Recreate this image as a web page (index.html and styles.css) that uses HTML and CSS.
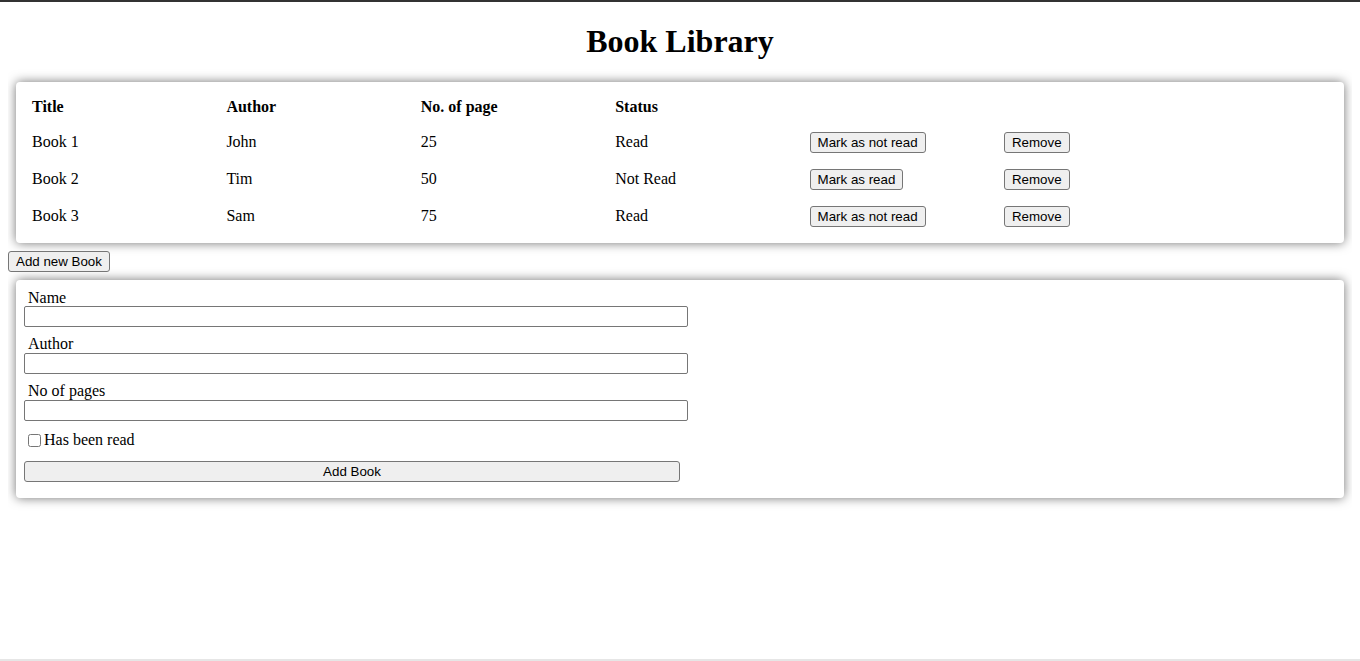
FILE: index.html
```html
<!DOCTYPE html>
<html lang="en">
<head>
<meta charset="utf-8">
<title>Book Library</title>
<link rel="stylesheet" href="styles.css">
</head>
<body>
<div class="topline"></div>
<h1 class="title">Book Library</h1>
<div class="card library">
  <div class="grid">
    <div class="cell head">Title</div>
    <div class="cell head">Author</div>
    <div class="cell head">No. of page</div>
    <div class="cell head">Status</div>
    <div class="cell head"></div>
    <div class="cell head"></div>

    <div class="cell">Book 1</div>
    <div class="cell">John</div>
    <div class="cell">25</div>
    <div class="cell">Read</div>
    <div class="cell"><button class="btn">Mark as not read</button></div>
    <div class="cell"><button class="btn">Remove</button></div>

    <div class="cell">Book 2</div>
    <div class="cell">Tim</div>
    <div class="cell">50</div>
    <div class="cell">Not Read</div>
    <div class="cell"><button class="btn">Mark as read</button></div>
    <div class="cell"><button class="btn">Remove</button></div>

    <div class="cell">Book 3</div>
    <div class="cell">Sam</div>
    <div class="cell">75</div>
    <div class="cell">Read</div>
    <div class="cell"><button class="btn">Mark as not read</button></div>
    <div class="cell"><button class="btn">Remove</button></div>
  </div>
</div>
<div class="addrow"><button class="btn">Add new Book</button></div>
<div class="card formcard">
  <form class="form">
    <label class="lbl">Name</label>
    <input class="field" type="text">
    <label class="lbl">Author</label>
    <input class="field" type="text">
    <label class="lbl">No of pages</label>
    <input class="field" type="text">
    <div class="check"><input class="box" type="checkbox"><span>Has been read</span></div>
    <button class="btn submit" type="button">Add Book</button>
  </form>
</div>
<div class="bottomline"></div>
</body>
</html>
```

FILE: styles.css
```css
html, body {
  background: #fff;
}
body {
  margin: 8px;
  min-height: 600px;
  font-family: "Liberation Serif", "Times New Roman", serif;
  font-size: 16px;
  color: #000;
}
.topline {
  position: fixed;
  top: 0;
  left: 0;
  right: 0;
  height: 2px;
  background: #333;
}
.bottomline {
  position: fixed;
  bottom: 0;
  left: 0;
  right: 0;
  height: 2px;
  background: #e6e6e6;
}
.title {
  text-align: center;
  font-size: 32px;
  margin: 15px 0 22px;
}
.card {
  background: #fff;
  border-radius: 4px;
  box-shadow: 0 0 11px rgba(0, 0, 0, 0.55);
  margin: 0 8px;
}
.library {
  padding: 16px;
}
.grid {
  display: grid;
  grid-template-columns: repeat(6, 15%);
  row-gap: 16px;
  align-items: baseline;
}
.head {
  font-weight: bold;
}
.btn {
  font-family: "Liberation Sans", Arial, sans-serif;
  font-size: 13.333px;
  padding: 1px 7px;
  border: 1px solid #767676;
  border-radius: 3px;
  background: #efefef;
  color: #000;
  height: 21px;
}
.addrow {
  margin: 8px 0;
  line-height: 20px;
}
.addrow .btn {
  vertical-align: top;
}
.formcard {
  padding: 8px 8px 16px;
}
.form {
  display: flex;
  flex-direction: column;
  align-items: flex-start;
}
.lbl {
  margin-left: 4px;
  margin-top: 8px;
  line-height: 18px;
}
.lbl:first-child {
  margin-top: 1px;
  margin-bottom: -1px;
}
.field {
  box-sizing: border-box;
  width: 664px;
  height: 21px;
  padding: 1px 2px;
  border: 1px solid #767676;
  border-radius: 2px;
  font-family: "Liberation Sans", Arial, sans-serif;
  font-size: 13.333px;
}
.check {
  display: flex;
  align-items: center;
  margin-top: 8px;
  height: 22px;
}
.box {
  width: 13px;
  height: 13px;
  margin: 3px 3px 3px 4px;
}
.submit {
  width: 50%;
  margin-top: 10px;
}
```
